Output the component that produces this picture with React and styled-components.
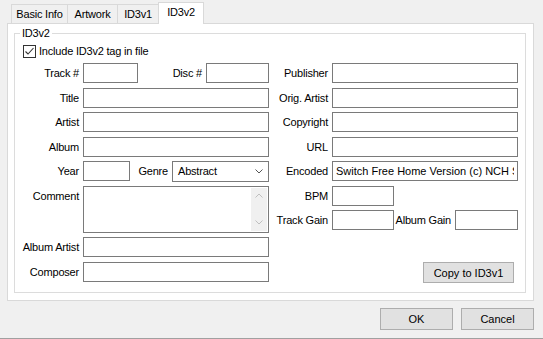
import React from "react";
import styled, { createGlobalStyle } from "styled-components";

const GlobalStyle = createGlobalStyle`
  html, body {
    margin: 0;
    padding: 0;
    background: #f0f0f0;
  }
  body {
    font-family: "Liberation Sans", Arial, sans-serif;
    font-size: 11px;
    letter-spacing: -0.2px;
    color: #000;
  }
`;

const tabs = [
  { name: "Basic Info", width: 57 },
  { name: "Artwork", width: 51 },
  { name: "ID3v1", width: 42 },
  { name: "ID3v2", width: 46, active: true },
];

const App = () => {
  return (
    <Window>
      <GlobalStyle />
      <TabStrip>
        {tabs.map((t, i) => (
          <Tab key={t.name} $w={t.width} $active={t.active} $first={i === 0}>
            {t.name}
          </Tab>
        ))}
      </TabStrip>

      <Panel>
        <Group>
          <Legend>ID3v2</Legend>
          <CheckRow>
            <CheckBox>
              <svg width="11" height="11" viewBox="0 0 11 11">
                <polyline
                  points="1.5,5.5 4,8 9.5,2"
                  fill="none"
                  stroke="#333"
                  strokeWidth="1.1"
                />
              </svg>
            </CheckBox>
            Include ID3v2 tag in file
          </CheckRow>

          <FormGrid>
            <Column>
              <Row>
                <Label $w={64}>Track #</Label>
                <Input $w={55} />
                <Label $grow>Disc #</Label>
                <Input $w={63} />
              </Row>
              <Row>
                <Label $w={64}>Title</Label>
                <Input $w={186} />
              </Row>
              <Row>
                <Label $w={64}>Artist</Label>
                <Input $w={186} />
              </Row>
              <Row>
                <Label $w={64}>Album</Label>
                <Input $w={186} />
              </Row>
              <Row>
                <Label $w={64}>Year</Label>
                <Input $w={47} />
                <Label $grow>Genre</Label>
                <Combo>
                  <span>Abstract</span>
                  <svg width="8" height="5" viewBox="0 0 8 5">
                    <polyline points="0.5,0.5 4,4 7.5,0.5" fill="none" stroke="#555" strokeWidth="1" />
                  </svg>
                </Combo>
              </Row>
              <Row $h={47} $top>
                <Label $w={64}>Comment</Label>
                <CommentBox>
                  <CommentText />
                  <ScrollBar>
                    <ScrollArrow>
                      <svg width="8" height="5" viewBox="0 0 8 5">
                        <polyline points="0.5,4.5 4,1 7.5,4.5" fill="none" stroke="#bfbfbf" strokeWidth="1" />
                      </svg>
                    </ScrollArrow>
                    <ScrollArrow>
                      <svg width="8" height="5" viewBox="0 0 8 5">
                        <polyline points="0.5,0.5 4,4 7.5,0.5" fill="none" stroke="#bfbfbf" strokeWidth="1" />
                      </svg>
                    </ScrollArrow>
                  </ScrollBar>
                </CommentBox>
              </Row>
              <Row>
                <Label $w={64}>Album Artist</Label>
                <Input $w={186} />
              </Row>
              <Row>
                <Label $w={64}>Composer</Label>
                <Input $w={186} />
              </Row>
            </Column>

            <Column>
              <Row>
                <Label $w={56}>Publisher</Label>
                <Input $w={186} />
              </Row>
              <Row>
                <Label $w={56}>Orig. Artist</Label>
                <Input $w={186} />
              </Row>
              <Row>
                <Label $w={56}>Copyright</Label>
                <Input $w={186} />
              </Row>
              <Row>
                <Label $w={56}>URL</Label>
                <Input $w={186} />
              </Row>
              <Row>
                <Label $w={56}>Encoded</Label>
                <Input $w={186} defaultValue="Switch Free Home Version (c) NCH Software" />
              </Row>
              <Row>
                <Label $w={56}>BPM</Label>
                <Input $w={62} />
              </Row>
              <Row>
                <Label $w={56}>Track Gain</Label>
                <Input $w={62} />
                <Label $grow>Album Gain</Label>
                <Input $w={63} />
              </Row>
              <CopyRow>
                <Button $w={91} $h={21}>Copy to ID3v1</Button>
              </CopyRow>
            </Column>
          </FormGrid>
        </Group>
      </Panel>

      <Footer>
        <Button $w={73} $h={22}>OK</Button>
        <Button $w={73} $h={22}>Cancel</Button>
      </Footer>
    </Window>
  );
};

const Window = styled.div`
  width: 543px;
  height: 339px;
  box-sizing: border-box;
  background: #f0f0f0;
  border-bottom: 1px solid #a0a0a0;
  display: flex;
  flex-direction: column;
  overflow: hidden;
`;

const TabStrip = styled.div`
  display: flex;
  align-items: flex-end;
  height: 23px;
  padding-left: 11px;
  flex-shrink: 0;
`;

const Tab = styled.div`
  box-sizing: border-box;
  width: ${(p) => p.$w}px;
  height: ${(p) => (p.$active ? 22 : 19)}px;
  margin-left: ${(p) => (p.$first ? 0 : -1)}px;
  margin-bottom: ${(p) => (p.$active ? -1 : 0)}px;
  padding-bottom: ${(p) => (p.$active ? 3 : 0)}px;
  border: 1px solid #d9d9d9;
  border-bottom: none;
  background: ${(p) => (p.$active ? "#fff" : "#f0f0f0")};
  display: flex;
  align-items: center;
  justify-content: center;
  white-space: nowrap;
  position: relative;
  z-index: ${(p) => (p.$active ? 1 : 0)};
`;

const Panel = styled.div`
  box-sizing: border-box;
  margin-left: 7px;
  width: 527px;
  height: 278px;
  flex-shrink: 0;
  border: 1px solid #d9d9d9;
  background: #fff;
  padding: 3px 0 0 6px;
`;

const Group = styled.fieldset`
  box-sizing: border-box;
  margin: 0;
  padding: 0;
  width: 512px;
  height: 266px;
  min-width: 0;
  border: 1px solid #dcdcdc;
`;

const Legend = styled.legend`
  margin-left: 5px;
  padding: 0 2px;
  line-height: 13px;
`;

const CheckRow = styled.label`
  display: flex;
  align-items: center;
  gap: 3px;
  margin: 5px 0 0 8px;
  height: 13px;
  line-height: 13px;
`;

const CheckBox = styled.span`
  box-sizing: border-box;
  width: 13px;
  height: 13px;
  border: 1px solid #333;
  background: #fff;
  display: flex;
  align-items: center;
  justify-content: center;
`;

const FormGrid = styled.div`
  display: grid;
  grid-template-columns: 254px 246px;
  column-gap: 3px;
  margin-top: 5px;
`;

const Column = styled.div`
  display: flex;
  flex-direction: column;
  gap: 4.5px;
`;

const Row = styled.div`
  display: flex;
  align-items: ${(p) => (p.$top ? "flex-start" : "center")};
  gap: 4px;
  height: ${(p) => p.$h || 20}px;
`;

const Label = styled.span`
  ${(p) => (p.$grow ? "flex: 1 1 0; min-width: 0;" : `width: ${p.$w}px; flex-shrink: 0;`)}
  display: flex;
  justify-content: flex-end;
  white-space: nowrap;
  line-height: 20px;
`;

const Input = styled.input`
  box-sizing: border-box;
  width: ${(p) => p.$w}px;
  height: 20px;
  flex-shrink: 0;
  margin: 0;
  border: 1px solid #7a7a7a;
  border-radius: 0;
  padding: 0 3px;
  background: #fff;
  font: inherit;
  color: #000;
  outline: none;
`;

const Combo = styled.div`
  box-sizing: border-box;
  width: 97px;
  height: 21px;
  flex-shrink: 0;
  border: 1px solid #7a7a7a;
  background: #fff;
  display: flex;
  align-items: center;
  justify-content: space-between;
  padding: 0 5px 0 5px;
`;

const CommentBox = styled.div`
  box-sizing: border-box;
  width: 186px;
  height: 47px;
  flex-shrink: 0;
  border: 1px solid #7a7a7a;
  background: #fff;
  display: flex;
  padding: 1px 1px 1px 0;
`;

const CommentText = styled.div`
  flex: 1;
`;

const ScrollBar = styled.div`
  width: 16px;
  background: #f0f0f0;
  display: flex;
  flex-direction: column;
  justify-content: space-between;
`;

const ScrollArrow = styled.div`
  height: 16px;
  display: flex;
  align-items: center;
  justify-content: center;
`;

const CopyRow = styled.div`
  display: flex;
  justify-content: flex-end;
  padding-right: 4px;
  margin-top: 27.5px;
`;

const Button = styled.button`
  box-sizing: border-box;
  width: ${(p) => p.$w}px;
  height: ${(p) => p.$h}px;
  margin: 0;
  padding: 0;
  background: #e1e1e1;
  border: 1px solid #adadad;
  border-radius: 0;
  font: inherit;
  color: #000;
`;

const Footer = styled.div`
  display: flex;
  justify-content: flex-end;
  gap: 8px;
  padding: 7px 9px 0 0;
`;

export default App;
